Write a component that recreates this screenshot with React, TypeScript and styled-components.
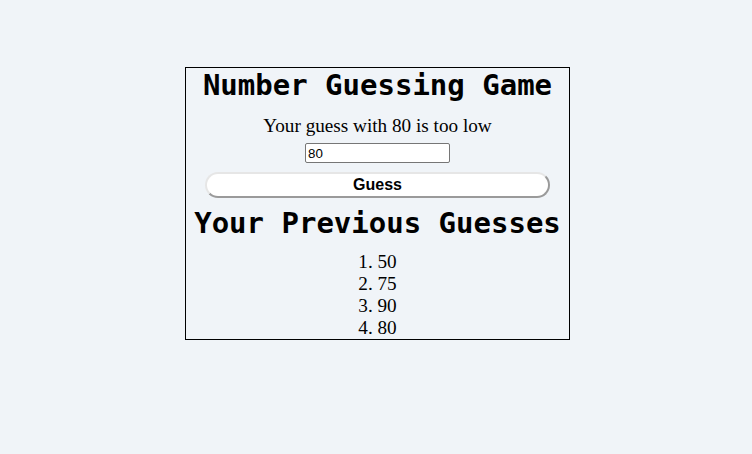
import React from "react";
import styled, { createGlobalStyle } from "styled-components";

const GlobalStyle = createGlobalStyle`
  html, body {
    margin: 0;
    padding: 0;
    background: #f0f4f8;
  }
  body {
    font-family: "Liberation Serif", "Times New Roman", serif;
    color: #000;
  }
`;

const Page = styled.div`
  min-height: 454px;
  padding: 67px 0 0 185px;
  box-sizing: border-box;
`;

const Card = styled.div`
  width: 385px;
  box-sizing: border-box;
  border: 1px solid #000;
  display: flex;
  flex-direction: column;
  align-items: center;
`;

const Heading = styled.h1<{ $gap: number }>`
  margin: ${(p) => p.$gap}px 0 0;
  font-family: "DejaVu Sans Mono", "Liberation Mono", monospace;
  font-weight: bold;
  font-size: 29px;
  line-height: 34px;
  white-space: nowrap;
`;

const Message = styled.p`
  margin: 12.5px 0 0;
  font-size: 19.2px;
  line-height: 22px;
`;

const GuessInput = styled.input`
  margin-top: 6.5px;
  width: 145px;
  height: 20px;
  box-sizing: border-box;
  border: 1px solid #767676;
  border-radius: 2px;
  background: #fff;
  padding: 1px 2px;
  font-family: "Liberation Sans", Arial, sans-serif;
  font-size: 13.33px;
  color: #000;
`;

const GuessButton = styled.button`
  margin-top: 9px;
  width: 345px;
  height: 26px;
  box-sizing: border-box;
  background: #fff;
  border: 2px solid;
  border-color: #e6e6e6 #9a9a9a #9a9a9a #e6e6e6;
  border-radius: 13px;
  font-family: "Liberation Sans", Arial, sans-serif;
  font-weight: bold;
  font-size: 16px;
  color: #000;
  padding: 0;
  cursor: pointer;
`;

const GuessList = styled.ol`
  align-self: stretch;
  margin: 11px 0 0;
  padding: 0;
  list-style-position: inside;
  text-align: center;
  font-size: 19.2px;
  line-height: 22px;
`;

const GuessItem = styled.li``;

const guesses = [50, 75, 90, 80];

export default function App() {
  return (
    <>
      <GlobalStyle />
      <Page>
        <Card>
          <Heading $gap={0}>Number Guessing Game</Heading>
          <Message>Your guess with 80 is too low</Message>
          <GuessInput type="text" defaultValue="80" />
          <GuessButton>Guess</GuessButton>
          <Heading as="h2" $gap={8}>Your Previous Guesses</Heading>
          <GuessList>
            {guesses.map((g, i) => (
              <GuessItem key={i}>{g}</GuessItem>
            ))}
          </GuessList>
        </Card>
      </Page>
    </>
  );
}
